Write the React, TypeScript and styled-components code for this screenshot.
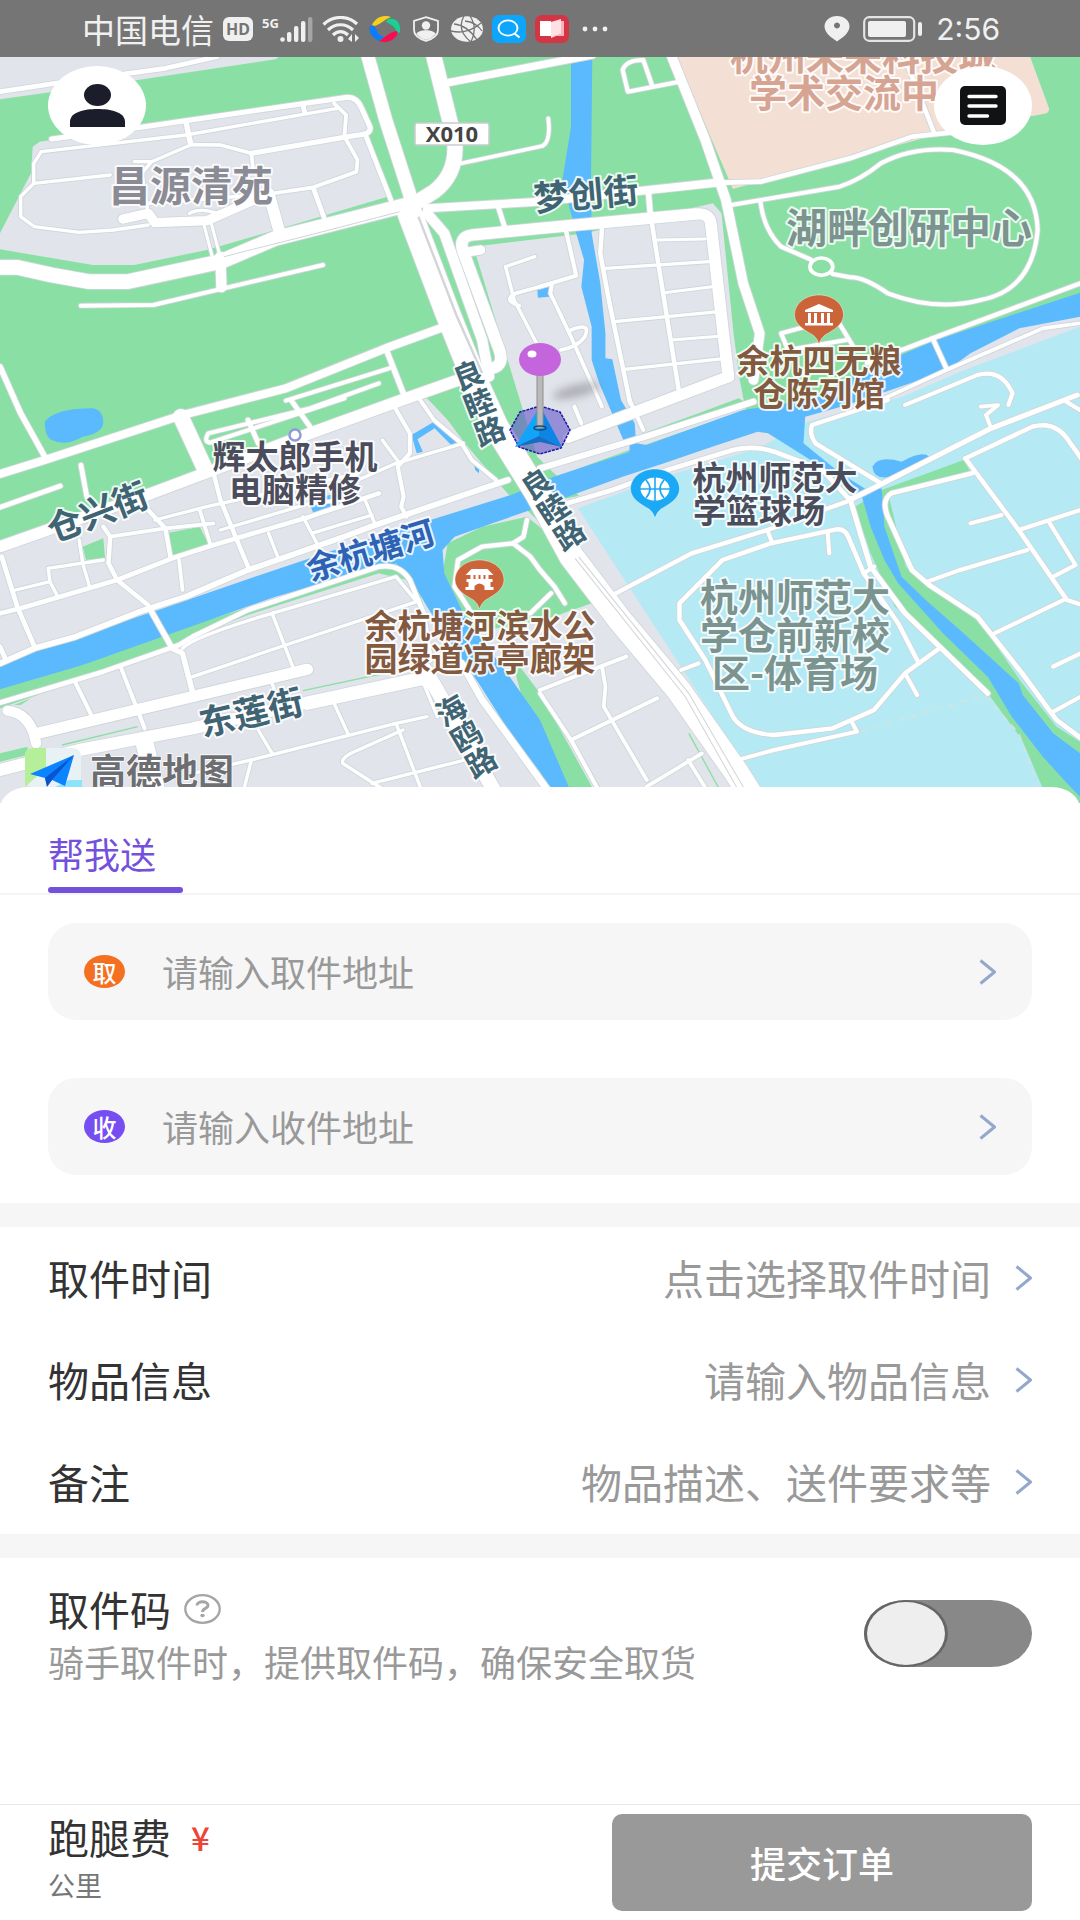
import React, { useState } from "react";
import styled, { createGlobalStyle } from "styled-components";

const FONT = '"Noto Sans CJK SC", "Noto Sans", sans-serif';

const GlobalStyle = createGlobalStyle`
  *, *::before, *::after { box-sizing: border-box; }
  body { margin: 0; background: #fff; font-family: ${FONT}; }
  button, input { font-family: inherit; margin: 0; border: 0; padding: 0; background: none; }
`;

const Page = styled.div`
  display: flex;
  flex-direction: column;
  min-height: 100vh;
`;

/* ---------- status bar ---------- */

const StatusBar = styled.header`
  display: flex;
  justify-content: space-between;
  align-items: center;
  height: 57px;
  padding: 0 80px 0 82px;
  background: #757575;
  color: #f0f0f0;
`;

const StatusGroup = styled.div<{ $gap: number }>`
  display: flex;
  align-items: center;
  gap: ${(p) => p.$gap}px;
  svg { display: block; }
`;

const Carrier = styled.span`
  font-size: 33px;
  line-height: 36px;
`;

const HdBadge = styled.span`
  width: 30px;
  border-radius: 6px;
  background: #f0f0f0;
  color: #757575;
  font: 700 16px/24px "Noto Sans", sans-serif;
  text-align: center;
`;

const Cell = styled.div`
  display: flex;
  align-items: flex-end;
  height: 26px;
`;

const CellKind = styled.span`
  align-self: flex-start;
  width: 18px;
  font: 700 13px/14px "Open Sans", sans-serif;
`;

const Clock = styled.time`
  font: 400 30px/36px Inter, sans-serif;
`;

/* ---------- map ---------- */

const MapArea = styled.section`
  position: relative;
  overflow: hidden;
`;

const MapCanvas = styled.svg`
  display: block;
  width: 100%;
  height: auto;
  font-family: ${FONT};
`;

const MapButton = styled.button<{ $side: "left" | "right" }>`
  position: absolute;
  top: 9px;
  ${(p) => p.$side}: 48px;
  display: flex;
  align-items: center;
  justify-content: center;
  width: 98px;
  height: 79px;
  border-radius: 50%;
  background: #fff;
`;

const MapLabel = styled.text<{ $size: number; $color: string; $vertical?: boolean }>`
  font-size: ${(p) => p.$size}px;
  font-weight: 700;
  fill: ${(p) => p.$color};
  stroke: rgba(255, 255, 255, 0.85);
  stroke-width: 4px;
  stroke-linejoin: round;
  paint-order: stroke;
  text-anchor: middle;
  writing-mode: ${(p) => (p.$vertical ? "vertical-rl" : "horizontal-tb")};
`;

const PinShadow = styled.ellipse`
  fill: rgba(90, 90, 90, 0.4);
  filter: blur(4px);
`;

/* ---------- order sheet ---------- */

const Sheet = styled.main`
  position: relative;
  flex: 1;
  display: flex;
  flex-direction: column;
  margin-top: -16px;
  border-radius: 28px 28px 0 0 / 22px 22px 0 0;
  background: #fff;
`;

const Tabs = styled.nav`
  display: flex;
  padding: 32px 48px 0;
  border-bottom: 2px solid #f4f4f4;
`;

const Tab = styled.button`
  width: 135px;
  height: 74px;
  padding-bottom: 6px;
  text-align: left;
  font-size: 36px;
  line-height: 64px;
  color: #7351dd;
  position: relative;
  &::after {
    content: "";
    position: absolute;
    left: 0;
    right: 0;
    bottom: 0;
    height: 6px;
    border-radius: 3px;
    background: #7351dd;
  }
`;

const AddressList = styled.div`
  display: flex;
  flex-direction: column;
  gap: 58px;
  padding: 28px 48px;
`;

const AddressCard = styled.label`
  display: flex;
  align-items: center;
  height: 97px;
  padding: 0 36px;
  border-radius: 28px;
  background: #f6f6f6;
`;

const Badge = styled.span<{ $color: string }>`
  width: 41px;
  margin-right: 37px;
  border-radius: 50%;
  background: ${(p) => p.$color};
  color: #fff;
  font-size: 24px;
  font-weight: 500;
  line-height: 33px;
  text-align: center;
`;

const TextField = styled.input<{ $size: number; $end?: boolean }>`
  flex: 1;
  min-width: 0;
  height: 60px;
  padding-bottom: 2px;
  outline: none;
  font-size: ${(p) => p.$size}px;
  text-align: ${(p) => (p.$end ? "right" : "left")};
  color: #333;
  &::placeholder { color: #999; opacity: 1; }
`;

const Divider = styled.div`
  height: 24px;
  background: #f6f6f6;
`;

const Details = styled.section`
  display: flex;
  flex-direction: column;
  padding-bottom: 1px;
`;

const DetailRow = styled.label`
  display: flex;
  align-items: center;
  height: 102px;
  padding: 0 48px;
  gap: 24px;
`;

const RowTitle = styled.span`
  padding-bottom: 2px;
  font-size: 41px;
  line-height: 50px;
  color: #333;
`;

const PickerButton = styled.button`
  flex: 1;
  padding-bottom: 2px;
  text-align: right;
  font-size: 41px;
  line-height: 58px;
  color: #999;
`;

const CodeSection = styled.section`
  flex: 1;
  display: flex;
  justify-content: space-between;
  align-items: flex-start;
  padding: 25px 48px;
`;

const CodeHeading = styled.div`
  display: flex;
  align-items: center;
  gap: 13px;
`;

const HelpButton = styled.button`
  display: flex;
`;

const Hint = styled.p`
  margin: 0;
  font-size: 36px;
  line-height: 52px;
  color: #999;
`;

const Toggle = styled.input`
  appearance: none;
  width: 168px;
  height: 67px;
  margin-top: 17px;
  border-radius: 42px / 34px;
  background: #888;
  &::before {
    content: "";
    display: block;
    width: 84px;
    height: 67px;
    border: solid #666;
    border-width: 2px 3px;
    border-radius: 50%;
    background: #eee;
  }
  &:checked { background: #7351dd; }
  &:checked::before { margin-left: 84px; }
`;

const Footer = styled.footer`
  display: flex;
  justify-content: space-between;
  align-items: flex-start;
  gap: 24px;
  padding: 9px 48px;
  border-top: 1px solid #e8e8e8;
`;

const Fee = styled.div`
  display: flex;
  align-items: center;
  gap: 20px;
  height: 46px;
`;

const Currency = styled.span`
  font-size: 33px;
  font-weight: 500;
  line-height: 36px;
  color: #ee4438;
`;

const Distance = styled.div`
  font-size: 27px;
  line-height: 50px;
  color: #777;
`;

const Submit = styled.button`
  flex: 0 1 420px;
  height: 97px;
  padding-bottom: 2px;
  border-radius: 10px;
  background: #999;
  color: #fff;
  font-size: 36px;
  font-weight: 500;
`;

/* ---------- icons ---------- */

const Chevron = () => (
  <svg width="17" height="26" viewBox="0 0 17 26" fill="none" aria-hidden="true">
    <path d="M1.500 1.500 15.500 13 1.500 24.500" stroke="#93a8cc" strokeWidth="3" strokeLinejoin="round" />
  </svg>
);

const SignalIcon = () => (
  <svg width="33" height="26" viewBox="0 0 33 26" fill="#f0f0f0">
    <circle cx="2.5" cy="23.5" r="2.3" />
    <rect x="7" y="16" width="4.4" height="10" rx="2" />
    <rect x="14" y="10" width="4.4" height="16" rx="2" />
    <rect x="21" y="5" width="4.4" height="21" rx="2" />
    <rect x="28" y="1" width="4.4" height="25" rx="2" fill="#a5a5a5" />
  </svg>
);

const WifiIcon = () => (
  <svg width="38" height="26" viewBox="0 0 38 26" fill="none" stroke="#f0f0f0" strokeWidth="3.2">
    <path d="M1.5 8.5C11-.8 26-.8 35 8" />
    <path d="M6 14C13 7 24 7 31 14" />
    <path d="M11 19C15.500 14.500 21.500 14.500 26 19" />
    <circle cx="18.500" cy="23" r="3" fill="#f0f0f0" stroke="none" />
    <path d="M30 18v8l-4-3zM33 18v8l4-4z" fill="#f0f0f0" stroke="none" />
  </svg>
);

const SwirlIcon = () => (
  <svg width="32" height="26" viewBox="0 0 32 26">
    <path d="M3 9C6 2 14-2 22 1C16 3 12 8 6 10Z" fill="#f6cf1f" />
    <path d="M19 3C28 1 32 8 31 16L28 18C27 11 23 9 17 6Z" fill="#18d193" />
    <path d="M29 17C26 24 18 28 10 25C16 22 20 16 28 15Z" fill="#f90b52" />
    <path d="M1 10C5 9 7 12 8 15C9 18 12 20 15 21L10 25C3 22-1 16 1 10Z" fill="#0b7cfa" />
  </svg>
);

const ShieldIcon = () => (
  <svg width="32" height="26" viewBox="0 0 32 26">
    <path d="M16 1.2 28 5v9c0 6-6 9-12 11C10 23 4 20 4 14V5Z" fill="none" stroke="#f0f0f0" strokeWidth="1.8" />
    <circle cx="16" cy="9.500" r="4.200" fill="#f0f0f0" />
    <path d="M6.500 18C8 13 24 13 25.500 18C23 21 20 23 16 24C12 23 9 21 6.500 18Z" fill="#f0f0f0" />
  </svg>
);

const GlobeIcon = () => (
  <svg width="32" height="26" viewBox="0 0 32 26">
    <ellipse cx="16" cy="13" rx="16" ry="12.800" fill="#f0f0f0" />
    <path d="M3 8Q16 9 26 24M13 0Q5 14 20 26M0 15Q16 19 30 7M14 5Q25 6 31 15M19 0Q27 12 20 26" fill="none" stroke="#757575" strokeWidth="1.300" />
  </svg>
);

const SearchAppIcon = () => (
  <svg width="34" height="28" viewBox="0 0 34 28">
    <rect width="34" height="28" rx="7" fill="#0da6fc" />
    <ellipse cx="16" cy="13" rx="9.500" ry="7.600" fill="none" stroke="#fff" strokeWidth="1.900" />
    <path d="m22.500 18.500 5 4" stroke="#fff" strokeWidth="2.200" />
  </svg>
);

const BookAppIcon = () => (
  <svg width="34" height="28" viewBox="0 0 34 28">
    <rect width="34" height="28" rx="7" fill="#d43545" />
    <path d="M5 6h11v15H5z" fill="#fff" />
    <path d="m16 7 10-3v15l-10 4z" fill="#ffe0e4" />
    <path d="M26 6h3v15H18l8-2z" fill="#f8b3bd" />
  </svg>
);

const DotsIcon = () => (
  <svg width="30" height="6" viewBox="-4 0 30 6" fill="#f0f0f0">
    <circle cx="3" cy="3" r="2.400" />
    <circle cx="13" cy="3" r="2.400" />
    <circle cx="23" cy="3" r="2.400" />
  </svg>
);

const PlaceIcon = () => (
  <svg width="26" height="26" viewBox="0 0 26 26">
    <path d="M13 0C20 0 25.500 4.500 25.500 10.500C25.500 17 18 22 13 25.500C8 22 .5 17 .5 10.500C.5 4.500 6 0 13 0Zm0 6.500a3 3 0 1 0 .01 0Z" fill="#f0f0f0" fillRule="evenodd" />
  </svg>
);

const BatteryIcon = () => (
  <svg width="60" height="26" viewBox="0 0 60 26">
    <rect x="1.200" y="1.200" width="50" height="23.600" rx="5" fill="none" stroke="#e4e4e4" strokeWidth="2.200" />
    <rect x="5" y="5" width="38" height="16" rx="2" fill="#f0f0f0" />
    <rect x="55" y="6" width="4" height="14" rx="2" fill="#f0f0f0" />
  </svg>
);

const UserIcon = () => (
  <svg width="55" height="43" viewBox="0 0 55 43" fill="#1c1d2a">
    <ellipse cx="27.500" cy="11" rx="13.500" ry="11" />
    <path d="M0 43V37C1 28 14 25 27.500 25S54 28 55 37V43Z" />
  </svg>
);

const ListIcon = () => (
  <svg width="46" height="39" viewBox="0 0 46 39">
    <rect width="46" height="39" rx="5" fill="#111214" />
    <path d="M9 10.500H36M9 20H36M9 30H27.500" stroke="#fff" strokeWidth="3.400" strokeLinecap="round" />
  </svg>
);

const HelpIcon = () => (
  <svg width="37" height="30" viewBox="0 0 37 30" fill="none" stroke="#a5a5a8">
    <ellipse cx="18.500" cy="15" rx="17.200" ry="13.800" strokeWidth="2.300" />
    <path d="M13 11.500C13 6.500 24 6.500 24 11.500C24 14.500 18.500 14 18.500 18" strokeWidth="3" />
    <ellipse cx="18.500" cy="21.500" rx="2.200" ry="1.700" fill="#a5a5a8" stroke="none" />
  </svg>
);

/* ---------- map data: each tile has its own origin on the survey grid ---------- */

type Road = [string, number];
type Tile = { x: number; y: number; roads: Road[] };

const tiles: Tile[] = [
  {
    x: 0,
    y: 0,
    roads: [
      ["M0,275 L160,250 L480,205 L630,170", 14],
      ["M150,417 L420,380 L1000,293 Q1035,287 1050,325 L1074,380 Q1078,396 1060,402 L1000,412 L730,460", 15],
      ["M120,455 L540,405 L980,325", 10],
      ["M120,455 L98,490 L98,550 L60,590 L60,650 L100,680 L230,697 L330,690 L430,675", 10],
      ["M98,550 L320,525", 10],
      ["M540,365 L553,430", 16],
      ["M555,434 L640,435 L730,460 L735,510", 11],
      ["M555,434 L440,485 L390,485 M440,485 L412,520 L430,640", 10],
      ["M430,610 L780,582 L910,562 L1035,515 L1038,480 L1000,410 L1005,345 L970,310", 11],
      ["M357,657 L430,640 L450,668 L600,662 L770,585", 28],
      ["M550,640 Q580,622 630,640", 10],
      ["M780,580 L810,690", 34],
      ["M910,565 L940,650", 14],
      ["M590,665 L615,765 M612,665 L638,765", 9],
      ["M640,770 L643,862", 30],
      ["M235,917 L445,915 L938,795", 12],
      ["M880,315 L885,340", 14],
      ["M1060,402 L1135,600", 14],
      ["M0,802 L50,802 L150,825 L260,845 L370,845 L640,785 L800,715 L1180,615", 44],
      ["M1063,150 L1120,360 L1195,600", 38],
      ["M1255,150 L1320,420 Q1330,520 1260,575 L1190,620", 44],
      ["M1290,250 L1720,165", 22],
      ["M1340,490 L1575,438 Q1600,425 1592,355", 11],
      ["M1240,625 L1568,605 L2080,548", 24],
      ["M1448,625 L1465,680", 14],
      ["M1240,640 L1290,700 L1400,1020 L1420,1130", 30],
      ["M1395,750 L1350,757", 28],
      ["M1430,1105 Q1465,1095 1450,1050 L1345,755 Q1330,710 1372,705 L1568,685 L2020,642 Q2060,638 2064,670 L2100,1000 L2115,1130 L1650,1312", 34],
      ["M1190,640 L1300,940 L1370,1120 L1440,1280 L1560,1480 L1660,1670 L1800,1860 L1970,2070 L2140,2320 L2200,2420", 72],
      ["M1330,965 L1120,1045 L830,1165 L530,1245 L130,1380 L0,1422", 24],
      ["M1120,1045 L1175,1190", 16],
      ["M830,1202 L1130,1105", 12],
      ["M1100,1150 L900,1225 L605,1300 Q590,1325 610,1328 L860,1243 L1000,1195", 12],
      ["M1400,1115 L1180,1195 L900,1300 L620,1410 L440,1480 L0,1640", 34],
      ["M0,1100 L60,1240 L130,1370", 16],
      ["M525,1250 L592,1400", 46],
    ],
  },
  {
    x: 1568,
    y: 0,
    roads: [
      ["M375,150 L480,420 L540,600 L590,850 L638,1000 L620,1140", 28],
      ["M315,580 L320,640", 16],
      ["M75,690 L105,827 L0,860", 12],
      ["M180,685 L175,760 L200,900 L262,1210", 13],
      ["M325,670 L345,800 L402,1165", 13],
      ["M190,805 L490,785 M215,965 L520,935 M245,1108 L540,1075", 10],
      ["M340,720 L480,717 M360,878 L500,860 M380,1020 L530,1008", 9],
      ["M-15,770 L-100,800 L-75,900 L-10,1030", 10],
      ["M-60,917 Q-110,900 -70,880 L35,850 L30,880 L90,1010 L180,1220", 11],
      ["M90,990 Q150,965 130,1010 Q110,1040 60,1050", 11],
      ["M530,548 L640,545 L900,475 L1080,410 L1190,398", 14],
      ["M1065,190 L1145,400", 13],
      ["M555,615 L870,560 Q930,540 990,490 Q1080,440 1200,450 Q1440,500 1445,690 Q1430,870 1280,900 Q1150,935 1010,880 Q940,830 900,832 L850,822", 12],
      ["M640,605 Q650,690 700,740 L785,778", 12],
      ["M405,245 L255,275 L240,210 Q250,180 300,180 L325,255", 12],
      ["M700,1000 L860,955 L910,1040 M700,1000 L720,1050 L890,1020", 12],
      ["M1580,846 L1140,1015 L950,1090", 13],
      ["M1140,1015 L1180,1105", 13],
      ["M1580,968 L1460,985 L1180,1110 L1000,1195", 11],
      ["M1060,1215 L1270,1125 Q1340,1105 1372,1180 L1360,1215", 12],
    ],
  },
  {
    x: 0,
    y: 1200,
    roads: [
      ["M235,195 L252,290", 14],
      ["M175,258 L0,322", 14],
      ["M845,0 L900,80 M720,60 L750,130", 14],
      ["M0,790 L100,745 L220,710 L420,630 L540,590 L720,510 L1000,410 L1090,375 L1475,240", 17],
      ["M0,640 L60,625 L340,540 L500,475 L620,435 L900,350 L1100,280", 14],
      ["M5,470 L50,620 L100,740 M0,740 L15,775", 14],
      ["M300,380 L320,410 L315,490 L340,540 L430,615", 13],
      ["M320,410 L480,385 L620,370", 11],
      ["M430,330 L480,385 L495,470", 13],
      ["M580,330 L610,430", 11],
      ["M45,570 L145,545 L165,585 M145,545 L140,505 L300,480 M230,420 L240,490 L260,560", 10],
      ["M450,360 L600,320 L1040,220", 10],
      ["M620,220 L640,300 L720,500", 13],
      ["M640,390 L900,310 L1000,300 M780,400 L810,480 M880,350 L920,430 M905,400 L1080,345 M1060,300 L1090,375", 10],
      ["M520,480 L530,570", 11],
      ["M1040,240 L1150,190 L1345,130", 10],
      ["M1145,20 L1190,100 L1190,160 L1155,200 L1172,290 L1165,320 L1180,350", 12],
      ["M1220,0 L1260,60 L1340,130 L1370,180 L1440,240", 12],
      ["M1110,120 L1160,190", 10],
      ["M0,908 L300,815 L520,735 L560,710 L720,630 L1100,500 Q1160,490 1190,540 L1230,640 L1250,780", 14],
      ["M440,635 L500,745 L530,760 L560,880", 16],
      ["M530,745 Q560,710 790,640 L1150,530 L1210,605 L830,735 L560,830 M790,640 L850,800", 10],
      ["M350,800 L420,985 M220,850 L265,945", 12],
      ["M110,1000 L892,808", 34],
      ["M22,932 Q90,940 105,1030", 30],
      ["M0,1110 L230,1050 L560,985 L880,910 L1240,830", 36],
      ["M1235,810 L1330,980 L1450,1200", 42],
      ["M1340,790 L1400,900 L1590,1170", 20],
      ["M420,1030 L455,1180", 52],
      ["M750,990 L790,1060 M560,1120 L730,1080 L1150,970 L1240,950 M1150,970 L1220,1160 M970,910 L1010,1000", 10],
      ["M730,1080 L705,1180 M1115,1170 L995,1090 Q990,1070 1040,1050 L1170,990 M1080,1150 L1350,1080", 10],
      ["M790,850 L800,880 M890,925 L1230,850 L1270,950", 10],
      ["M1530,360 L1520,410 L1490,430 L1400,440 L1330,480 L1320,560 L1370,640 L1400,690", 13],
      ["M1490,430 L1540,470 L1568,510 L1610,560 L1640,610 M1600,580 L1540,640", 13],
    ],
  },
  {
    x: 1568,
    y: 1200,
    roads: [
      ["M0,205 L300,112 L620,5", 18],
      ["M260,0 L300,90 M100,20 L120,70", 12],
      ["M80,310 L210,270 L370,210 L560,150 Q620,135 680,155 L820,210 L900,300", 14],
      ["M1010,0 L790,75 Q780,100 800,130 L990,250", 13],
      ["M900,300 L1310,85 L1560,-15", 15],
      ["M1310,85 L1295,45 L1330,15 L1280,20", 11],
      ["M1520,0 L1568,30", 12],
      ["M890,305 L660,390 L440,460 L220,580", 13],
      ["M660,390 L675,430 M835,395 L840,460", 12],
      ["M900,295 L930,400 L960,500 L1060,640 L1300,880", 15],
      ["M1160,745 L1060,820 L970,930 L850,985 L680,1005 Q590,1000 560,950 L480,780 L405,660 L405,610 L530,480 L670,430 L860,388 Q885,385 895,410 L940,520 L1040,670 L1095,780", 13],
      ["M940,520 L970,500 M1060,820 L1095,885 M905,965 L920,995 L680,1050 L580,1078 M410,810 L460,790", 12],
      ["M1255,220 L1020,280 Q990,300 1010,350 L1080,510 L1130,555 L1270,650 L1400,820 L1500,960 L1575,1018", 14],
      ["M1235,175 L1430,80 Q1500,60 1540,130 L1575,180", 13],
      ["M1235,175 L1390,390 L1530,600 L1575,615", 13],
      ["M1390,390 L1570,330 M1480,370 L1555,495 L1490,530 M1125,545 L1220,510 L1415,450 M1250,370 L1340,345", 12],
      ["M1320,700 L1520,600 M1490,800 L1570,760 M1490,935 L1570,890", 12],
      ["M0,870 L250,770 M0,880 L90,1020 L175,1180 M90,1020 L340,895", 12],
      ["M180,800 L190,860 L185,920 L310,1140 M310,1160 L470,1060 M430,1080 L490,1180", 11],
    ],
  },
];

const RoadLayer = ({ color, extra }: { color: string; extra: number }) => (
  <g fill="none" stroke={color} strokeLinecap="round" strokeLinejoin="round">
    {tiles.map((t) => (
      <g key={`${t.x}-${t.y}`} transform={`translate(${t.x} ${t.y})`}>
        {t.roads.map(([d, w]) => (
          <path key={d} d={d} strokeWidth={w + extra} />
        ))}
      </g>
    ))}
  </g>
);

const Terrain = () => (
  <g>
    <rect width="3136" height="2450" fill="#8ae0a4" />
    <g fill="#e1e4eb">
      <path d="M0,150 L840,150 L800,178 L400,240 L0,298Z" />
      <path d="M95,440 L115,425 L1010,290 L1050,330 L1125,590 L800,690 L600,750 L390,795 L270,795 L0,748 L0,700 L90,520Z" />
      <path d="M1375,740 L1700,700 L2070,610 L2095,640 L2130,1000 L2148,1140 L2165,1230 L1830,1350 L1620,1430 L1560,1370 L1480,1100Z" />
      <path d="M0,1650 L420,1490 L620,1410 L860,1300 L1240,1195 L1300,1260 L1350,1330 L1440,1440 L1500,1500 L1900,1900 L2300,2400 L0,2450Z" />
      <path d="M1600,1410 L2400,1220 L3136,900 L3136,1200 L1800,1600Z" />
      <path d="M1620,1500 L1720,1480 L2300,2450 L1500,2450 L1600,1900Z" />
    </g>
    <path d="M1955,150 L2984,150 L3046,325 Q3048,340 3030,342 L2748,395 L2628,430 L2188,550 L2128,567Z" fill="#f3dfd4" />
    <path d="M1678,1525 L1930,1430 L2200,1345 L2345,1265 L2620,1190 L2800,1110 L3136,980 L3136,2450 L2260,2450Z" fill="#b5eaf5" />
    <g fill="#8ae0a4">
      <path d="M0,2060 L1150,1680 L1200,1705 L1240,1860 L1180,1740 L1100,1720 L720,1845 L300,2015 L0,2125Z" />
      <path d="M1530,1550 L1400,1580 L1300,1630 L1285,1720 L1310,1800 L1360,1900 L1580,1860 L1718,1810 L1670,1740 L1590,1600Z" />
      <path d="M1250,1195 L1380,1180 L1470,1440 L1490,1500 L1440,1440 L1360,1310 L1300,1260Z" />
      <path d="M1480,1960 L1568,2080 L1740,2400 L1600,2400Z" />
      <path d="M490,1598 L580,1580 L605,1632 L500,1668Z M240,1640 L300,1615 L305,1675 L250,1680Z" />
      <path d="M0,2260 L80,2240 L80,2265 L0,2285Z M40,2115 L90,2095 L60,2115Z" />
      <path d="M2483,1520 L2560,1470 L2798,1380 L2820,1420 L2580,1485 L2630,1700 L2698,1760 L2848,1870 L2968,2050 L3068,2180 L3136,2225 L3136,2450 L3030,2370 L2968,2220 L2868,2080 L2698,1900 L2598,1820 L2528,1660Z" />
      <path d="M1750,1345 L2158,1222 L2170,1210 L2145,1195 L2040,1235Z" />
    </g>
    <g fill="none" stroke="#8ae0a4" strokeWidth="4">
      <path d="M1615,1432 L1828,1352 M880,2072 L1230,1995 M180,2235 L400,2180 M2000,2200 L2090,2370 M1660,2220 L1740,2360" />
    </g>
    <g fill="#5abafd">
      <path d="M0,2000 L100,1950 L460,1830 L740,1730 L1000,1640 L1250,1560 L1490,1483 L1608,1430 L1828,1355 L1828,1325 L1848,1330 L1878,1335 L2158,1230 L2368,1195 L2468,1130 L2718,1020 L3136,878 L3136,950 L2960,985 L2818,1060 L2748,1112 L2460,1215 L2338,1250 L2333,1330 L2440,1420 L2518,1470 L2560,1465 L2568,1580 L2618,1730 L2688,1800 L2798,1900 L2958,2050 L2970,2085 L3058,2200 L3136,2260 L3136,2390 L3098,2350 L3028,2270 L2938,2150 L2868,2030 L2738,1900 L2608,1750 L2568,1680 L2528,1580 L2500,1480 L2400,1410 L2230,1300 L2200,1295 L2068,1340 L1928,1390 L1808,1430 L1648,1490 L1540,1530 L1430,1570 L1320,1610 L1285,1650 L1290,1720 L1350,1850 L1400,1920 L1480,2030 L1568,2160 L1668,2400 L1610,2400 L1570,2320 L1470,2180 L1390,2050 L1290,1900 L1240,1820 L1190,1730 L1150,1690 L1120,1695 L800,1790 L500,1900 L240,1995 L0,2068Z" />
      <path d="M1658,150 L1720,150 L1716,560 L1718,700 L1743,850 L1758,1000 L1758,1075 L1778,1078 L1803,1200 L1843,1270 L1848,1340 L1810,1320 L1740,1150 L1718,1080 L1718,980 L1688,860 L1696,780 L1673,700 L1633,540 L1658,380Z" />
      <path d="M130,1265 Q160,1225 270,1225 Q300,1230 300,1265 Q300,1300 240,1310 Q190,1340 150,1320 Q130,1310 130,1265Z" />
      <path d="M2533,1400 Q2550,1365 2618,1385 Q2680,1350 2698,1370 L2640,1410 Q2540,1460 2533,1400Z" />
      <path d="M1195,1305 L1265,1262 L1325,1328 L1310,1335 L1262,1285 L1212,1318 L1228,1355 L1210,1360Z" />
      <path d="M895,1500 L980,1480 L975,1520 L910,1540Z M1375,1385 L1395,1390 L1390,1420 L1380,1410Z M1560,868 L1595,860 L1595,890 L1562,893Z" />
    </g>
  </g>
);

const PinShape = ({ color }: { color: string }) => (
  <path d="M0,-20 C14,-20 24.500,-11 24.500,0 C24.500,10 13,16 6,20 Q2,23 0,29 Q-2,23 -6,20 C-13,16 -24.500,10 -24.500,0 C-24.500,-11 -14,-20 0,-20Z" fill={color} stroke="#fff" strokeOpacity="0.4" strokeWidth="1" />
);

const CityMap = () => (
  <MapCanvas viewBox="0 57 1080 746" role="img" aria-label="地图">
    <g transform="scale(0.34439 0.33333)">
      <Terrain />
      <RoadLayer color="#cfd6da" extra={5} />
      <RoadLayer color="#fff" extra={0} />
      <g fill="none" stroke="#d3d5d8" strokeWidth="3">
        <path d="M650,770 L900,705 L1160,635" />
        <path d="M1215,650 L1325,945 L1400,1120" strokeWidth="7" />
        <path d="M1670,1675 L1990,2090 L2160,2400 M1680,1670 L2000,2080 L2180,2400" />
      </g>
      <ellipse cx="2385" cy="800" rx="33" ry="26" fill="#8ae0a4" stroke="#fff" strokeWidth="11" />
      <path d="M2498,2195 L2858,2085 L2958,2200 L3018,2370" fill="none" stroke="#d3e3de" strokeWidth="5" strokeDasharray="20 18" />
    </g>

    <MapLabel $size={41} $color="#8a8b95" x="191" y="201">昌源清苑</MapLabel>
    <MapLabel $size={41} $color="#7b9490" x="909" y="243">湖畔创研中心</MapLabel>
    <MapLabel $size={38} $color="#d6a493" x="863" y="70">杭州未来科技城</MapLabel>
    <MapLabel $size={38} $color="#d6a493" x="863" y="107">学术交流中心</MapLabel>
    <MapLabel $size={38} $color="#7b9490" x="795" y="611">杭州师范大</MapLabel>
    <MapLabel $size={38} $color="#7b9490" x="795" y="649">学仓前新校</MapLabel>
    <MapLabel $size={38} $color="#7b9490" x="795" y="687">区-体育场</MapLabel>

    <MapLabel $size={33} $color="#835a3f" x="819" y="373">余杭四无粮</MapLabel>
    <MapLabel $size={33} $color="#835a3f" x="819" y="406">仓陈列馆</MapLabel>
    <MapLabel $size={33} $color="#835a3f" x="480" y="638">余杭塘河滨水公</MapLabel>
    <MapLabel $size={33} $color="#835a3f" x="480" y="671">园绿道凉亭廊架</MapLabel>
    <MapLabel $size={33} $color="#4b4d5c" x="295" y="469">辉太郎手机</MapLabel>
    <MapLabel $size={33} $color="#4b4d5c" x="295" y="502">电脑精修</MapLabel>
    <MapLabel $size={33} $color="#4b4d5c" x="775" y="490">杭州师范大</MapLabel>
    <MapLabel $size={33} $color="#4b4d5c" x="759" y="523">学篮球场</MapLabel>

    <MapLabel $size={35} $color="#3f6473" transform="translate(587 207) rotate(-5)">梦创街</MapLabel>
    <MapLabel $size={35} $color="#3f6473" transform="translate(102 524) rotate(-21)">仓兴街</MapLabel>
    <MapLabel $size={35} $color="#3f6473" transform="translate(254 725) rotate(-13)">东莲街</MapLabel>
    <MapLabel $size={33} $color="#2e62b4" transform="translate(374 562) rotate(-17)">余杭塘河</MapLabel>
    <MapLabel $vertical $size={30} $color="#3f6473" transform="translate(479 403) rotate(-21)">良睦路</MapLabel>
    <MapLabel $vertical $size={30} $color="#3f6473" transform="translate(553 509) rotate(-33)">良睦路</MapLabel>
    <MapLabel $vertical $size={30} $color="#3f6473" transform="translate(466 736) rotate(-30)">海鸥路</MapLabel>

    <rect x="415" y="123" width="74" height="22" rx="2" fill="#fff" stroke="#c9cdd0" strokeWidth="1.500" />
    <text x="452" y="142" fontFamily="Open Sans, sans-serif" fontWeight="700" fontSize="22" fill="#444" textAnchor="middle">X010</text>

    <g transform="translate(819 315)">
      <PinShape color="#cc643a" />
      <path d="M-14,-5 L0,-11 L14,-5 V-3 H-14Z M-11,-2h3v10h-3z M-5,-2h3v10h-3z M2,-2h3v10h-3z M8,-2h3v10h-3z M-14,8h28v2.500h-28z" fill="#fff" />
    </g>
    <g transform="translate(479.500 580)">
      <PinShape color="#cc643a" />
      <g fill="#fff">
        <path d="M-8,-11H8L14,-5H-14Z" />
        <path d="M-9,-5h3v4h-3z M-4,-5h3v4h-3z M1,-5h3v4h-3z M6,-5h3v4h-3z" />
        <path d="M-13,-1H13V2H-13Z" />
        <path d="M-11,2H11V7H14V10H5V6Q0,1 -5,6V10H-14V7H-11Z" />
      </g>
    </g>
    <g transform="translate(655 489)">
      <PinShape color="#1ba9f5" />
      <ellipse cx="0" cy="0" rx="14.500" ry="11.500" fill="#fff" />
      <path d="M0,-12V12M-15,0H15M-9,-9Q-1,0-9,9M9,-9Q1,0 9,9" fill="none" stroke="#1ba9f5" strokeWidth="1.600" />
    </g>
    <circle cx="295" cy="435" r="5.500" fill="#fff" stroke="#8f9ad8" strokeWidth="2.500" />

    <PinShadow cx="576" cy="391" rx="24" ry="6" transform="rotate(-14 576 391)" />
    <path d="M540,406 L560,412 L570,430 L561,448 L540,454 L519,447 L510,430 L520,412Z" fill="#6456cc" fillOpacity="0.6" stroke="#1c1ca0" strokeWidth="1.500" strokeDasharray="3 1" />
    <path d="M540,406 L515,447 L539,436Z" fill="#10a5fb" />
    <path d="M540,406 L562,447 L539,436Z" fill="#0d85e6" />
    <path d="M515,447 L539,436 L562,447 L540,442Z" fill="#126fc4" />
    <rect x="537" y="374" width="6" height="54" fill="#b9b9b9" stroke="#8e8e8e" strokeWidth="1" />
    <ellipse cx="540" cy="428" rx="6" ry="2" fill="none" stroke="#174a75" strokeWidth="1.500" />
    <ellipse cx="540" cy="359.500" rx="21" ry="16.500" fill="#c565dd" />
    <ellipse cx="532" cy="354" rx="4.500" ry="3.600" fill="#fff" />

    <g transform="translate(25 748)">
      <rect width="56" height="39" rx="8" fill="#e8f2f4" />
      <path d="M0,39V8Q0,0 8,0H21V20L0,39Z" fill="#b6ef9a" />
      <path d="M30,39L44,32H57V39Z" fill="#8be4fb" />
      <path d="M5,26L49,7L40,38L27,32L22,38L20,30Z" fill="#0b84ff" />
      <path d="M49,7L20,30L22,39L27,32Z" fill="#0a54cf" />
    </g>
    <text x="90" y="785" fontSize="36" fontWeight="700" fill="#6d6e72" stroke="#fff" strokeWidth="1.500" paintOrder="stroke">高德地图</text>
  </MapCanvas>
);

const addresses = [
  { id: "pickup", mark: "取", color: "#f56f20", hint: "请输入取件地址" },
  { id: "receive", mark: "收", color: "#764df0", hint: "请输入收件地址" },
];

const fields = [
  { id: "goods", title: "物品信息", hint: "请输入物品信息" },
  { id: "remark", title: "备注", hint: "物品描述、送件要求等" },
];

export default function App() {
  const [codeOn, setCodeOn] = useState(false);
  return (
    <Page>
      <GlobalStyle />
      <StatusBar>
        <StatusGroup $gap={9}>
          <Carrier>中国电信</Carrier>
          <HdBadge>HD</HdBadge>
          <Cell>
            <CellKind>5G</CellKind>
            <SignalIcon />
          </Cell>
          <WifiIcon />
          <SwirlIcon />
          <ShieldIcon />
          <GlobeIcon />
          <SearchAppIcon />
          <BookAppIcon />
          <DotsIcon />
        </StatusGroup>
        <StatusGroup $gap={13}>
          <PlaceIcon />
          <BatteryIcon />
          <Clock>2:56</Clock>
        </StatusGroup>
      </StatusBar>

      <MapArea>
        <CityMap />
        <MapButton $side="left" aria-label="个人中心">
          <UserIcon />
        </MapButton>
        <MapButton $side="right" aria-label="订单列表">
          <ListIcon />
        </MapButton>
      </MapArea>

      <Sheet>
        <Tabs>
          <Tab type="button">帮我送</Tab>
        </Tabs>
        <AddressList>
          {addresses.map((a) => (
            <AddressCard key={a.id} htmlFor={a.id}>
              <Badge $color={a.color}>{a.mark}</Badge>
              <TextField id={a.id} $size={36} placeholder={a.hint} />
              <Chevron />
            </AddressCard>
          ))}
        </AddressList>
        <Divider />
        <Details>
          <DetailRow htmlFor="time">
            <RowTitle>取件时间</RowTitle>
            <PickerButton id="time" type="button">点击选择取件时间</PickerButton>
            <Chevron />
          </DetailRow>
          {fields.map((f) => (
            <DetailRow key={f.id} htmlFor={f.id}>
              <RowTitle>{f.title}</RowTitle>
              <TextField id={f.id} $size={41} $end placeholder={f.hint} />
              <Chevron />
            </DetailRow>
          ))}
        </Details>
        <Divider />
        <CodeSection>
          <div>
            <CodeHeading>
              <RowTitle as="label" htmlFor="code">取件码</RowTitle>
              <HelpButton type="button" aria-label="取件码说明">
                <HelpIcon />
              </HelpButton>
            </CodeHeading>
            <Hint>骑手取件时，提供取件码，确保安全取货</Hint>
          </div>
          <Toggle id="code" type="checkbox" role="switch" checked={codeOn} onChange={(e) => setCodeOn(e.target.checked)} />
        </CodeSection>
        <Footer>
          <div>
            <Fee>
              <RowTitle>跑腿费</RowTitle>
              <Currency>¥</Currency>
            </Fee>
            <Distance>公里</Distance>
          </div>
          <Submit type="button">提交订单</Submit>
        </Footer>
      </Sheet>
    </Page>
  );
}
